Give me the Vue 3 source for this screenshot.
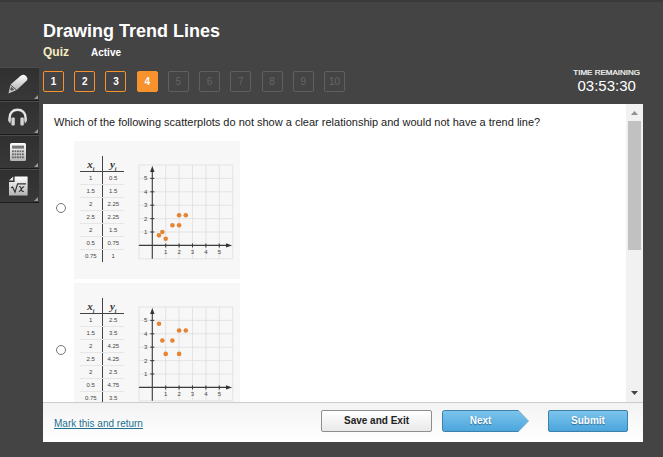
<script setup>
import { ref } from 'vue'

const questions = [1, 2, 3, 4, 5, 6, 7, 8, 9, 10]
const current = 4
const choice = ref(null)

const options = [
  {
    id: 'a',
    rows: [
      ['1', '0.5'], ['1.5', '1.5'], ['2', '2.25'], ['2.5', '2.25'],
      ['2', '1.5'], ['0.5', '0.75'], ['0.75', '1'],
    ],
  },
  {
    id: 'b',
    rows: [
      ['1', '2.5'], ['1.5', '3.5'], ['2', '4.25'], ['2.5', '4.25'],
      ['2', '2.5'], ['0.5', '4.75'], ['0.75', '3.5'],
    ],
  },
]

const unit = 13.4
const px = (v) => 15.3 + v * unit
const py = (v) => 82.4 - v * unit
const gridSteps = [-1, 0, 1, 2, 3, 4, 5, 6]
const ticks = [1, 2, 3, 4, 5]

function stateOf(n) {
  if (n === current) return 'current'
  return n < current ? 'done' : 'locked'
}
</script>

<template>
  <div class="page">
    <nav class="tools" aria-label="Tools">
      <button class="tool" type="button" aria-label="Highlighter">
        <svg width="22" height="22" viewBox="0 0 22 22">
          <defs>
            <linearGradient id="metal" x1="0" y1="0" x2="0" y2="1">
              <stop offset="0" stop-color="#fff" />
              <stop offset="1" stop-color="#b4b4b4" />
            </linearGradient>
          </defs>
          <path d="M14 2.4 Q16.6 0.8 19 3 Q21.4 5.4 19.8 7.6 L9.8 17 L3.6 11.6 Z" fill="url(#metal)" />
          <path d="M3.4 12 L9.2 17.2 L5 19 L1.4 20.4 L2.4 16.6 Z" fill="#c4c4c4" />
          <path d="M4.2 13.8 L7.2 16.6 L4.4 17.8 L3.2 16.6 Z" fill="#555" />
        </svg>
      </button>
      <button class="tool" type="button" aria-label="Audio">
        <svg width="22" height="22" viewBox="0 0 22 22">
          <path d="M2.6 14 V11 C2.6 5.6 6 2.8 10.6 2.8 S18.6 5.6 18.6 11 V14" fill="none" stroke="#e4e4e4" stroke-width="2.4" />
          <path d="M1.4 11.4 H3.6 V16.6 Q1.4 15.6 1.4 13.6 Z M19.8 11.4 H17.6 V16.6 Q19.8 15.6 19.8 13.6 Z" fill="#d0d0d0" />
          <rect x="4.4" y="10.4" width="3.4" height="8" rx="1" fill="#d4d4d4" />
          <rect x="13.4" y="10.4" width="3.4" height="8" rx="1" fill="#d4d4d4" />
        </svg>
      </button>
      <button class="tool" type="button" aria-label="Calculator">
        <svg width="22" height="22" viewBox="0 0 22 22">
          <rect x="3" y="2" width="16" height="18" rx="1.5" fill="url(#metal)" />
          <rect x="5" y="4.6" width="12" height="3" fill="#777" />
          <g fill="#666">
            <template v-for="r in 3" :key="r">
              <rect v-for="c in 5" :key="c" :x="2.5 + c * 2.5" :y="6.4 + r * 3" width="1.8" height="1.8" />
            </template>
          </g>
        </svg>
      </button>
      <button class="tool" type="button" aria-label="Equation editor">
        <svg width="22" height="22" viewBox="0 0 22 22">
          <path d="M7.6 1.4 H20.6 V20.4 H2 V7 H7.6 Z" fill="url(#metal)" />
          <path d="M2 5.6 L6.2 1.4 V5.6 Z" fill="#e8e8e8" />
          <path d="M4 12.8 L5.6 12 L8 17.2 L10.6 8.8 H19" fill="none" stroke="#333" stroke-width="1.2" />
          <path d="M12 11.6 Q13.6 11 14.2 14 Q14.8 17.2 16.8 16.2 M17.2 11.6 Q15.6 11.6 14.4 14 Q13 16.8 11.8 16.6" fill="none" stroke="#333" stroke-width="1.2" />
        </svg>
      </button>
    </nav>

    <div class="body">
      <header class="header">
        <div class="heading">
          <h1>Drawing Trend Lines</h1>
          <div class="meta">
            <span class="kind">Quiz</span>
            <span class="status">Active</span>
          </div>
          <div class="steps">
            <button
              v-for="n in questions"
              :key="n"
              type="button"
              class="step"
              :class="stateOf(n)"
              :disabled="n > current"
            >{{ n }}</button>
          </div>
        </div>
        <div class="timer">
          <div class="timer-label">TIME REMAINING</div>
          <div class="timer-value">03:53:30</div>
        </div>
      </header>

      <main class="panel">
        <div class="viewport">
          <div class="content">
            <p id="question" class="question">Which of the following scatterplots do not show a clear relationship and would not have a trend line?</p>
            <div class="options" role="radiogroup" aria-labelledby="question">
              <label v-for="o in options" :key="o.id" class="option">
                <input v-model="choice" type="radio" name="answer" :value="o.id" />
                <div class="card">
                  <table>
                    <thead>
                      <tr><th>x<sub>i</sub></th><th>y<sub>i</sub></th></tr>
                    </thead>
                    <tbody>
                      <tr v-for="(r, i) in o.rows" :key="i"><td>{{ r[0] }}</td><td>{{ r[1] }}</td></tr>
                    </tbody>
                  </table>
                  <svg class="chart" width="98" height="98" viewBox="0 0 98 98">
                    <g stroke="#dedede" stroke-width="0.8">
                      <line v-for="g in gridSteps" :key="'v' + g" :x1="px(g)" :x2="px(g)" :y1="py(-1)" :y2="py(6)" />
                      <line v-for="g in gridSteps" :key="'h' + g" :x1="px(-1)" :x2="px(6)" :y1="py(g)" :y2="py(g)" />
                    </g>
                    <g stroke="#3c3c3c" stroke-width="1.1">
                      <line :x1="px(-1)" :x2="px(5.6)" :y1="py(0)" :y2="py(0)" />
                      <line :x1="px(0)" :x2="px(0)" :y1="py(-1)" :y2="py(5.6)" />
                      <line v-for="t in ticks" :key="'tx' + t" :x1="px(t)" :x2="px(t)" :y1="py(0) - 2" :y2="py(0) + 2" />
                      <line v-for="t in ticks" :key="'ty' + t" :x1="px(0) - 2" :x2="px(0) + 2" :y1="py(t)" :y2="py(t)" />
                    </g>
                    <path d="M15.3 3 L17.5 9 H13.1 Z M95 82.4 L89 80.2 V84.6 Z" fill="#333" />
                    <g class="tick-text">
                      <text v-for="t in ticks" :key="'lx' + t" :x="px(t)" :y="py(0) + 9" text-anchor="middle">{{ t }}</text>
                      <text v-for="t in ticks" :key="'ly' + t" :x="px(0) - 5" :y="py(t) + 2" text-anchor="end">{{ t }}</text>
                    </g>
                    <circle v-for="(r, i) in o.rows" :key="i" :cx="px(+r[0])" :cy="py(+r[1])" r="2.3" fill="#e58534" />
                  </svg>
                </div>
              </label>
            </div>
          </div>
          <div class="scrollbar" aria-hidden="true">
            <svg width="17" height="17" viewBox="0 0 17 17"><path d="M5 11 L8.5 7 L12 11 Z" fill="#8f8f8f" /></svg>
            <div class="track"><div class="thumb"></div></div>
            <svg width="17" height="17" viewBox="0 0 17 17"><path d="M5 6 L8.5 10 L12 6 Z" fill="#444" /></svg>
          </div>
        </div>

        <footer class="footer">
          <a href="#">Mark this and return</a>
          <div class="actions">
            <button type="button" class="btn save">Save and Exit</button>
            <button type="button" class="btn next">
              <svg width="87" height="22" viewBox="0 0 87 22" aria-hidden="true">
                <defs>
                  <linearGradient id="sky" x1="0" y1="0" x2="0" y2="1">
                    <stop offset="0" stop-color="#7cc4ec" />
                    <stop offset="1" stop-color="#4ba5dc" />
                  </linearGradient>
                </defs>
                <path d="M2.5 0.5 H76.5 L86.5 11 L76.5 21.5 H2.5 Q0.5 21.5 0.5 19.5 V2.5 Q0.5 0.5 2.5 0.5 Z" fill="url(#sky)" />
                <path d="M76.5 0.5 L86.5 11 L76.5 21.5" fill="none" stroke="#8fb4cc" />
                <path d="M76.5 0.5 H2.5 Q0.5 0.5 0.5 2.5 V19.5 Q0.5 21.5 2.5 21.5 H76.5" fill="none" stroke="#3d80aa" />
              </svg>
              <span>Next</span>
            </button>
            <button type="button" class="btn submit">Submit</button>
          </div>
        </footer>
      </main>
    </div>
  </div>
</template>

<style>
body {
  margin: 0;
  background: #444;
}
</style>

<style scoped>
.page {
  box-sizing: border-box;
  display: flex;
  gap: 4px;
  height: 100vh;
  border-top: 2px solid #3a3a3a;
  background: #444;
  color: #fff;
  font-family: "Liberation Sans", Arial, sans-serif;
}

button {
  margin: 0;
  padding: 0;
  font-family: inherit;
  cursor: pointer;
}

.tools {
  flex: none;
  width: 39px;
  padding-top: 65px;
}

.tool {
  position: relative;
  display: flex;
  align-items: center;
  width: 100%;
  height: 34px;
  padding-left: 7px;
  border: 0;
  border-top: 1px solid #4b4b4b;
  border-bottom: 1px solid #1c1c1c;
  background: linear-gradient(#303030, #383838);
}

.tool::after {
  content: "";
  position: absolute;
  right: 1px;
  bottom: 1px;
  border-left: 4px solid transparent;
  border-bottom: 4px solid #999;
}

.body {
  flex: 1;
  min-width: 0;
  display: flex;
  flex-direction: column;
  padding: 0 20px 15px 0;
}

.header {
  display: flex;
  justify-content: space-between;
  align-items: flex-end;
  padding: 18px 0 10px;
}

.heading {
  padding-bottom: 2px;
}

h1 {
  margin: 0;
  font-size: 18px;
  line-height: 22px;
}

.meta {
  display: flex;
  align-items: baseline;
  gap: 22px;
  line-height: 20px;
  font-weight: bold;
}

.kind {
  color: #f6eec0;
  font-size: 12px;
}

.status {
  font-size: 10px;
}

.steps {
  display: flex;
  justify-content: space-between;
  width: 302px;
  padding-top: 8px;
}

.step {
  box-sizing: border-box;
  width: 21px;
  height: 21px;
  border: 1px solid #f7922d;
  border-radius: 2px;
  background: transparent;
  color: #fff;
  font-size: 10px;
  font-weight: bold;
}

.step.current {
  background: #f7922d;
}

.step.locked {
  border-color: #606060;
  color: #646464;
  font-weight: normal;
  cursor: default;
}

.timer {
  padding-right: 3px;
  text-align: center;
}

.timer-label {
  font-size: 8px;
  line-height: 10px;
  -webkit-text-stroke: 0.2px #fff;
}

.timer-value {
  font-size: 15px;
  line-height: 16px;
}

.panel {
  flex: 1;
  min-height: 0;
  display: flex;
  flex-direction: column;
  background: #fff;
  color: #222;
}

.viewport {
  flex: 1;
  min-height: 0;
  display: flex;
}

.content {
  flex: 1;
  min-width: 0;
  overflow-y: auto;
  scrollbar-width: none;
  padding: 10px 11px 0;
}

.question {
  margin: 0 0 11px;
  font-size: 11px;
  line-height: 16px;
}

.options {
  display: flex;
  flex-direction: column;
  gap: 4px;
}

.option {
  display: flex;
  align-items: center;
  gap: 8px;
}

.option input {
  appearance: none;
  box-sizing: border-box;
  width: 10px;
  height: 10px;
  margin: 0 0 4px 2px;
  border: 1px solid #767676;
  border-radius: 50%;
  background: #fff;
}

.option input:checked {
  border: 3px solid #2a7ab0;
}

.card {
  box-sizing: border-box;
  display: flex;
  align-items: flex-start;
  gap: 13px;
  width: 166px;
  height: 138px;
  padding: 15px 5px 0 6px;
  background: #f7f7f7;
}

table {
  width: 44px;
  table-layout: fixed;
  border-collapse: collapse;
  color: #444;
  font-size: 6px;
  line-height: 12px;
  text-align: center;
}

th {
  height: 15px;
  padding: 0;
  border-bottom: 1px solid #444;
  color: #333;
  font: italic bold 11px/14px "Liberation Serif", serif;
}

th sub {
  font-size: 6px;
  line-height: 1px;
}

td {
  height: 12px;
  padding: 0;
  border-bottom: 1px solid #e6e6e6;
}

tr:last-child td {
  border-bottom: 0;
}

thead tr:last-child th {
  border-bottom: 1px solid #444;
}

th:first-child,
td:first-child {
  border-right: 1px solid #444;
}

.chart {
  flex: none;
  margin-top: 7px;
  margin-right: -3px;
}

.tick-text {
  fill: #444;
  font-size: 6px;
}

.scrollbar {
  flex: none;
  display: flex;
  flex-direction: column;
  width: 17px;
  background: #f1f1f1;
}

.track {
  flex: 1;
  padding: 0 2px;
}

.thumb {
  height: 49%;
  background: #c1c1c1;
}

.footer {
  flex: none;
  box-sizing: border-box;
  display: flex;
  align-items: center;
  justify-content: space-between;
  height: 40px;
  padding: 0 15px 4px 11px;
  border-top: 1px solid #ccc;
  background: linear-gradient(#f3f3f3, #fff);
}

.footer a {
  margin-top: 5px;
  color: #24718f;
  font-size: 10px;
}

.actions {
  display: flex;
}

.btn {
  box-sizing: border-box;
  height: 22px;
  border-radius: 2px;
  font-size: 10px;
  font-weight: bold;
}

.save {
  width: 111px;
  margin-right: 10px;
  border: 1px solid #8e8e8e;
  background: linear-gradient(#fff, #e9e9e9);
  color: #222;
}

.next,
.submit {
  color: #fff;
  text-shadow: 0 1px 1px #2f6d95;
}

.next {
  display: grid;
  width: 87px;
  margin-right: 19px;
  border: 0;
  background: transparent;
}

.next svg,
.next span {
  grid-area: 1 / 1;
}

.next span {
  align-self: center;
  padding-right: 10px;
}

.submit {
  width: 80px;
  border: 1px solid #3d80aa;
  background: linear-gradient(#7cc4ec, #4ba5dc);
}
</style>
